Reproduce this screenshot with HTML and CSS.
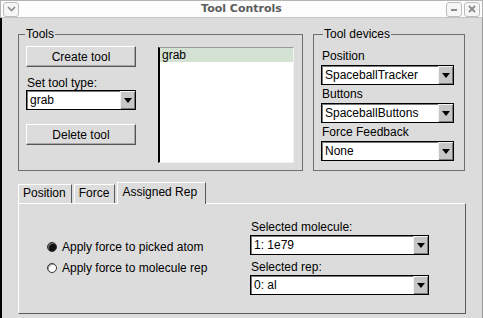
FILE: index.html
```html
<!DOCTYPE html>
<html lang="en">
<head>
    <meta charset="UTF-8">
    <title>Tool Controls</title>
    <link rel="stylesheet" href="styles.css">
</head>
<body>
    <div class="window">
        <div class="titlebar">
            <div class="tb-left">
                <span class="tb-btn">
                    <svg width="9" height="6" viewBox="0 0 9 6"><path d="M1 1 L4.5 4.5 L8 1" fill="none" stroke="#8a8a8a" stroke-width="1.6"/></svg>
                </span>
            </div>
            <span class="title">Tool Controls</span>
            <div class="tb-right">
                <span class="tb-btn">
                    <svg width="8" height="8" viewBox="0 0 8 8"><path d="M1 5 H7" stroke="#8a8a8a" stroke-width="2"/></svg>
                </span>
                <span class="tb-btn">
                    <svg width="8" height="8" viewBox="0 0 8 8"><path d="M1 1 L7 7 M7 1 L1 7" stroke="#8a8a8a" stroke-width="1.8"/></svg>
                </span>
            </div>
        </div>

        <div class="content">
            <div class="top-row">
                <fieldset class="frame tools">
                    <legend>Tools</legend>
                    <div class="tools-inner">
                        <div class="tool-col">
                            <button class="btn">Create tool</button>
                            <div class="label type-label">Set tool type:</div>
                            <div class="select"><span class="value">grab</span><span class="arrow"></span></div>
                            <button class="btn delete-btn">Delete tool</button>
                        </div>
                        <div class="listbox">
                            <div class="row selected">grab</div>
                        </div>
                    </div>
                </fieldset>

                <fieldset class="frame devices">
                    <legend>Tool devices</legend>
                    <div class="label first">Position</div>
                    <div class="select"><span class="value">SpaceballTracker</span><span class="arrow"></span></div>
                    <div class="label">Buttons</div>
                    <div class="select"><span class="value">SpaceballButtons</span><span class="arrow"></span></div>
                    <div class="label">Force Feedback</div>
                    <div class="select"><span class="value">None</span><span class="arrow"></span></div>
                </fieldset>
            </div>

            <div class="tabs">
                <span class="tab">Position</span>
                <span class="tab">Force</span>
                <span class="tab active">Assigned Rep</span>
            </div>

            <div class="panel">
                <div class="radios">
                    <div class="radio-row"><span class="radio checked"></span>Apply force to picked atom</div>
                    <div class="radio-row"><span class="radio"></span>Apply force to molecule rep</div>
                </div>
                <div class="rep-col">
                    <div class="label">Selected molecule:</div>
                    <div class="select"><span class="value">1: 1e79</span><span class="arrow"></span></div>
                    <div class="label second">Selected rep:</div>
                    <div class="select"><span class="value">0: al</span><span class="arrow"></span></div>
                </div>
            </div>
        </div>
    </div>
</body>
</html>
```

FILE: styles.css
```css
body {
    margin: 0;
    font-family: "Liberation Sans", Arial, sans-serif;
    font-size: 12px;
    line-height: 14px;
    color: #000;
    background: #dcdcdc;
}

.window {
    width: 483px;
    height: 318px;
    display: flex;
    flex-direction: column;
    box-sizing: border-box;
}

/* title bar */
.titlebar {
    height: 18px;
    box-sizing: border-box;
    display: grid;
    grid-template-columns: 1fr auto 1fr;
    align-items: center;
    background: #fdfdfd;
    border: 1px solid #b4b4b4;
    border-bottom-color: #c4c4c4;
    padding: 0 2px;
}

.title {
    font-family: "DejaVu Sans", sans-serif;
    font-weight: bold;
    font-size: 11px;
    color: #5c5c5c;
}

.tb-right {
    display: flex;
    justify-content: flex-end;
    gap: 2px;
}

.tb-btn {
    width: 14px;
    height: 13px;
    border: 1px solid #bdbdbd;
    border-radius: 3px;
    background: #f6f6f6;
    display: flex;
    align-items: center;
    justify-content: center;
}

/* main area */
.content {
    flex: 1;
    background: #dcdcdc;
    border-left: 2px solid #000;
    border-right: 1px solid #9a9a9a;
    padding: 9px 0 0 16px;
}

.top-row {
    display: flex;
    gap: 10px;
}

.frame {
    margin: 0;
    min-width: 0;
    box-sizing: border-box;
    border: 1px solid #6e6e6e;
    padding: 0 8px 7px 7px;
}

.frame legend {
    padding: 0 1px;
    margin-left: -1px;
}

.tools {
    width: 285px;
}

.devices {
    width: 152px;
    padding-right: 10px;
}

.devices legend {
    margin-left: 2px;
}

.tools-inner {
    display: flex;
    justify-content: space-between;
}

.tool-col {
    width: 110px;
}

.btn {
    display: block;
    width: 110px;
    height: 21px;
    margin: 5px 0 0;
    padding: 0;
    font: inherit;
    background: #dcdcdc;
    border: 1px solid;
    border-color: #fff #555 #555 #fff;
    box-shadow: inset -1px -1px 0 #a8a8a8;
}

.delete-btn {
    margin-top: 14px;
}

.label {
    padding-left: 1px;
    margin-top: 2px;
}

.label.first {
    margin-top: 8px;
}

.type-label {
    margin-top: 9px;
}

.select {
    height: 20px;
    box-sizing: border-box;
    display: flex;
    background: #fff;
    border: 1px solid #000;
    box-shadow: inset 1px 1px 0 #777;
    padding-left: 3px;
}

.devices .select {
    margin-top: 2px;
}

.select .value {
    flex: 1;
    line-height: 18px;
    white-space: nowrap;
    overflow: hidden;
}

.select .arrow {
    width: 15px;
    background: #c6c6c6;
    box-shadow: inset 1px 1px 0 #f2f2f2, inset -1px -1px 0 #7a7a7a;
    display: flex;
    align-items: center;
    justify-content: center;
}

.select .arrow::after {
    content: "";
    border-left: 4px solid transparent;
    border-right: 4px solid transparent;
    border-top: 5px solid #000;
}

.listbox {
    width: 136px;
    height: 116px;
    margin-top: 6px;
    box-sizing: border-box;
    background: #fff;
    border-left: 2px solid #000;
    border-top: 1px solid #9a9a9a;
    border-right: 1px solid #f2f2f2;
    border-bottom: 1px solid #f2f2f2;
}

.row {
    padding-left: 2px;
}

.row.selected {
    background: #d4e2d3;
}

/* notebook */
.tabs {
    display: flex;
    align-items: flex-end;
    margin-top: 11px;
    height: 21px;
}

.tab {
    padding: 1px 5px 3px 4px;
    margin-right: 2px;
    border-top: 1px solid #fff;
    border-left: 1px solid #fff;
    border-right: 1px solid #5a5a5a;
    background: #dcdcdc;
}

.tab.active {
    padding: 2px 8px 5px 4px;
    margin-bottom: -1px;
    position: relative;
    z-index: 1;
}

.panel {
    width: 448px;
    height: 111px;
    box-sizing: border-box;
    display: flex;
    align-items: center;
    justify-content: space-between;
    border: 1px solid;
    border-color: #fff #5c5c5c #5c5c5c #fff;
    padding: 0 36px 2px 28px;
}

.radio-row {
    display: flex;
    align-items: center;
    gap: 5px;
}

.radio-row + .radio-row {
    margin-top: 7px;
}

.radio {
    width: 10px;
    height: 10px;
    box-sizing: border-box;
    border-radius: 50%;
    border: 1px solid #333;
    background: #fff;
    box-shadow: inset 1px 1px 0 #999;
}

.radio.checked {
    background: #111;
    box-shadow: inset 1px 1px 0 #777;
}

.rep-col {
    width: 179px;
}

.rep-col .label {
    margin-top: 0;
    margin-bottom: 1px;
}

.rep-col .label.second {
    margin-top: 5px;
}
```
